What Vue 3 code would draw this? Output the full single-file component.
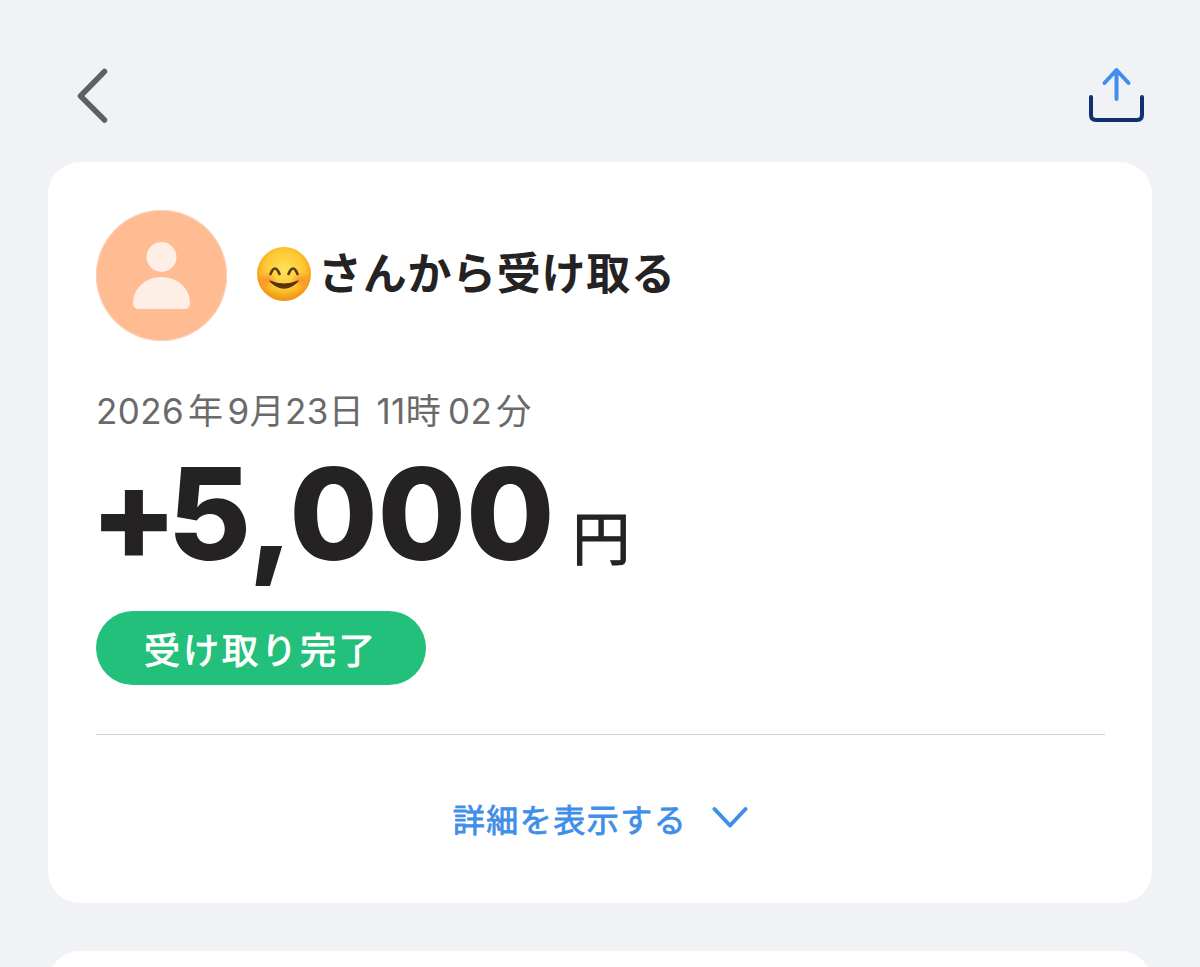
<script setup>
const title = 'さんから受け取る'
</script>

<template>
  <div class="page">
    <header class="top">
      <button class="icon-btn back" aria-label="戻る">
        <svg width="36" height="60" viewBox="0 0 36 60">
          <path d="M28.500 5.500 L4.500 30 L28.500 54" fill="none" stroke="#5f6064" stroke-width="5.500" stroke-linecap="round" stroke-linejoin="round" />
        </svg>
      </button>
      <button class="icon-btn share" aria-label="共有">
        <svg width="60" height="60" viewBox="0 0 60 60">
          <path d="M30.500 4 V33 M18.500 17 L30.500 4 L42.500 17" fill="none" stroke="#3f8ef0" stroke-width="4" stroke-linecap="round" stroke-linejoin="round" />
          <path d="M5 31 V49 Q5 54 10 54 H51 Q56 54 56 49 V31" fill="none" stroke="#10306f" stroke-width="4" stroke-linecap="round" />
        </svg>
      </button>
    </header>

    <section class="card main">
      <div class="who">
        <div class="avatar">
          <svg width="131" height="131" viewBox="0 0 131 131">
            <circle cx="65.500" cy="47" r="15" fill="#fdeee6" />
            <path d="M37 93 C37 78 50 67 65.500 67 C81 67 94 78 94 93 Q94 99 88 99 H43 Q37 99 37 93 Z" fill="#fdeee6" />
          </svg>
        </div>
        <div class="name">
          <svg class="smile" width="54" height="54" viewBox="0 0 54 54" role="img" aria-label="😊">
            <defs>
              <radialGradient id="face" cx="50%" cy="42%" r="58%">
                <stop offset="0%" stop-color="#ffe25a" />
                <stop offset="65%" stop-color="#fdc62f" />
                <stop offset="100%" stop-color="#ee8f12" />
              </radialGradient>
              <radialGradient id="blush" cx="50%" cy="50%" r="50%">
                <stop offset="0%" stop-color="#ff7a2a" stop-opacity=".7" />
                <stop offset="100%" stop-color="#ff7a2a" stop-opacity="0" />
              </radialGradient>
            </defs>
            <circle cx="27" cy="27" r="27" fill="url(#face)" />
            <ellipse cx="10" cy="33" rx="10" ry="8" fill="url(#blush)" />
            <ellipse cx="44" cy="33" rx="10" ry="8" fill="url(#blush)" />
            <path d="M13.500 27 Q18 16 22.500 27 M31.500 27 Q36 16 40.500 27" fill="none" stroke="#5a3a12" stroke-width="2.600" stroke-linecap="round" />
            <path d="M13 34 Q27 48 41 34 Q27 40 13 34 Z" fill="#5a3308" stroke="#5a3308" stroke-width="1.200" stroke-linejoin="round" />
          </svg>
          <span class="title">{{ title }}</span>
        </div>
      </div>

      <p class="date">2026<span class="gap">年</span>9月23日 11時<span class="gap-l">02</span><span class="gap">分</span></p>

      <div class="amount"><span class="num"><span class="plus">+</span>5,000</span><span class="yen">円</span></div>

      <div class="status">受け取り完了</div>

      <div class="rule"></div>

      <div class="more">
        <span>詳細を表示する</span>
        <svg width="36" height="24" viewBox="0 0 36 24">
          <path d="M2.500 3 L18 19.500 L33.500 3" fill="none" stroke="#3f8ee8" stroke-width="4" stroke-linecap="round" stroke-linejoin="round" />
        </svg>
      </div>
    </section>

    <section class="card next"></section>
  </div>
</template>

<style>
html, body { margin: 0; background: #f0f2f6; }
</style>

<style scoped>
.page {
  box-sizing: border-box;
  height: 967px;
  overflow: hidden;
  padding: 0 48px;
  background: #f0f2f6;
  font-family: Inter, "Noto Sans CJK JP", sans-serif;
}
.top {
  box-sizing: border-box;
  height: 162px;
  padding: 66px 6px 0 28px;
  display: flex;
  justify-content: space-between;
  align-items: flex-start;
}
.icon-btn { padding: 0; border: 0; background: none; display: block; line-height: 0; }
.card { background: #fff; border-radius: 32px; }
.main {
  box-sizing: border-box;
  height: 741px;
  padding: 48px 47px 0 48px;
}
.next { height: 120px; margin-top: 48px; }
.who { display: flex; align-items: center; gap: 30px; }
.avatar {
  width: 131px;
  height: 131px;
  border-radius: 50%;
  background: #ffbb92;
  box-shadow: inset 0 0 0 1px #fbd3bb;
  line-height: 0;
}
.name { display: flex; align-items: center; gap: 7px; margin-top: -4px; }
.smile { display: block; flex: none; }
.title {
  font-size: 44px;
  line-height: 54px;
  font-weight: 700;
  letter-spacing: 0.7px;
  color: #242223;
}
.date {
  margin: 48px 0 0;
  font-size: 35px;
  line-height: 44px;
  color: #6a6a6a;
  letter-spacing: 0.4px;
  word-spacing: 2px;
}
.gap { margin: 0 4px; }
.gap-l { margin-left: 7px; }
.amount {
  display: flex;
  align-items: baseline;
  margin-top: 9px;
  height: 158px;
  color: #242223;
}
.num { font-size: 128px; line-height: 144px; font-weight: 800; letter-spacing: -0.2px; margin-left: -6px; }
.plus { letter-spacing: -10px; }
.yen { font-size: 58px; font-weight: 400; -webkit-text-stroke: 1px #242223; margin-left: 18px; }
.status {
  box-sizing: border-box;
  width: 330px;
  height: 74px;
  margin-top: 11px;
  border-radius: 37px;
  background: #22c07a;
  color: #fff;
  font-size: 36px;
  font-weight: 400;
  -webkit-text-stroke: 1px #fff;
  letter-spacing: 3px;
  display: flex;
  align-items: center;
  justify-content: center;
}
.rule { height: 1px; margin-top: 49px; background: #cfcfd1; }
.more {
  margin-top: 60px;
  display: flex;
  justify-content: center;
  align-items: center;
  gap: 25px;
  color: #3f8ee8;
  font-size: 32px;
  font-weight: 400;
  -webkit-text-stroke: 0.8px #3f8ee8;
  letter-spacing: 1.5px;
}
</style>
